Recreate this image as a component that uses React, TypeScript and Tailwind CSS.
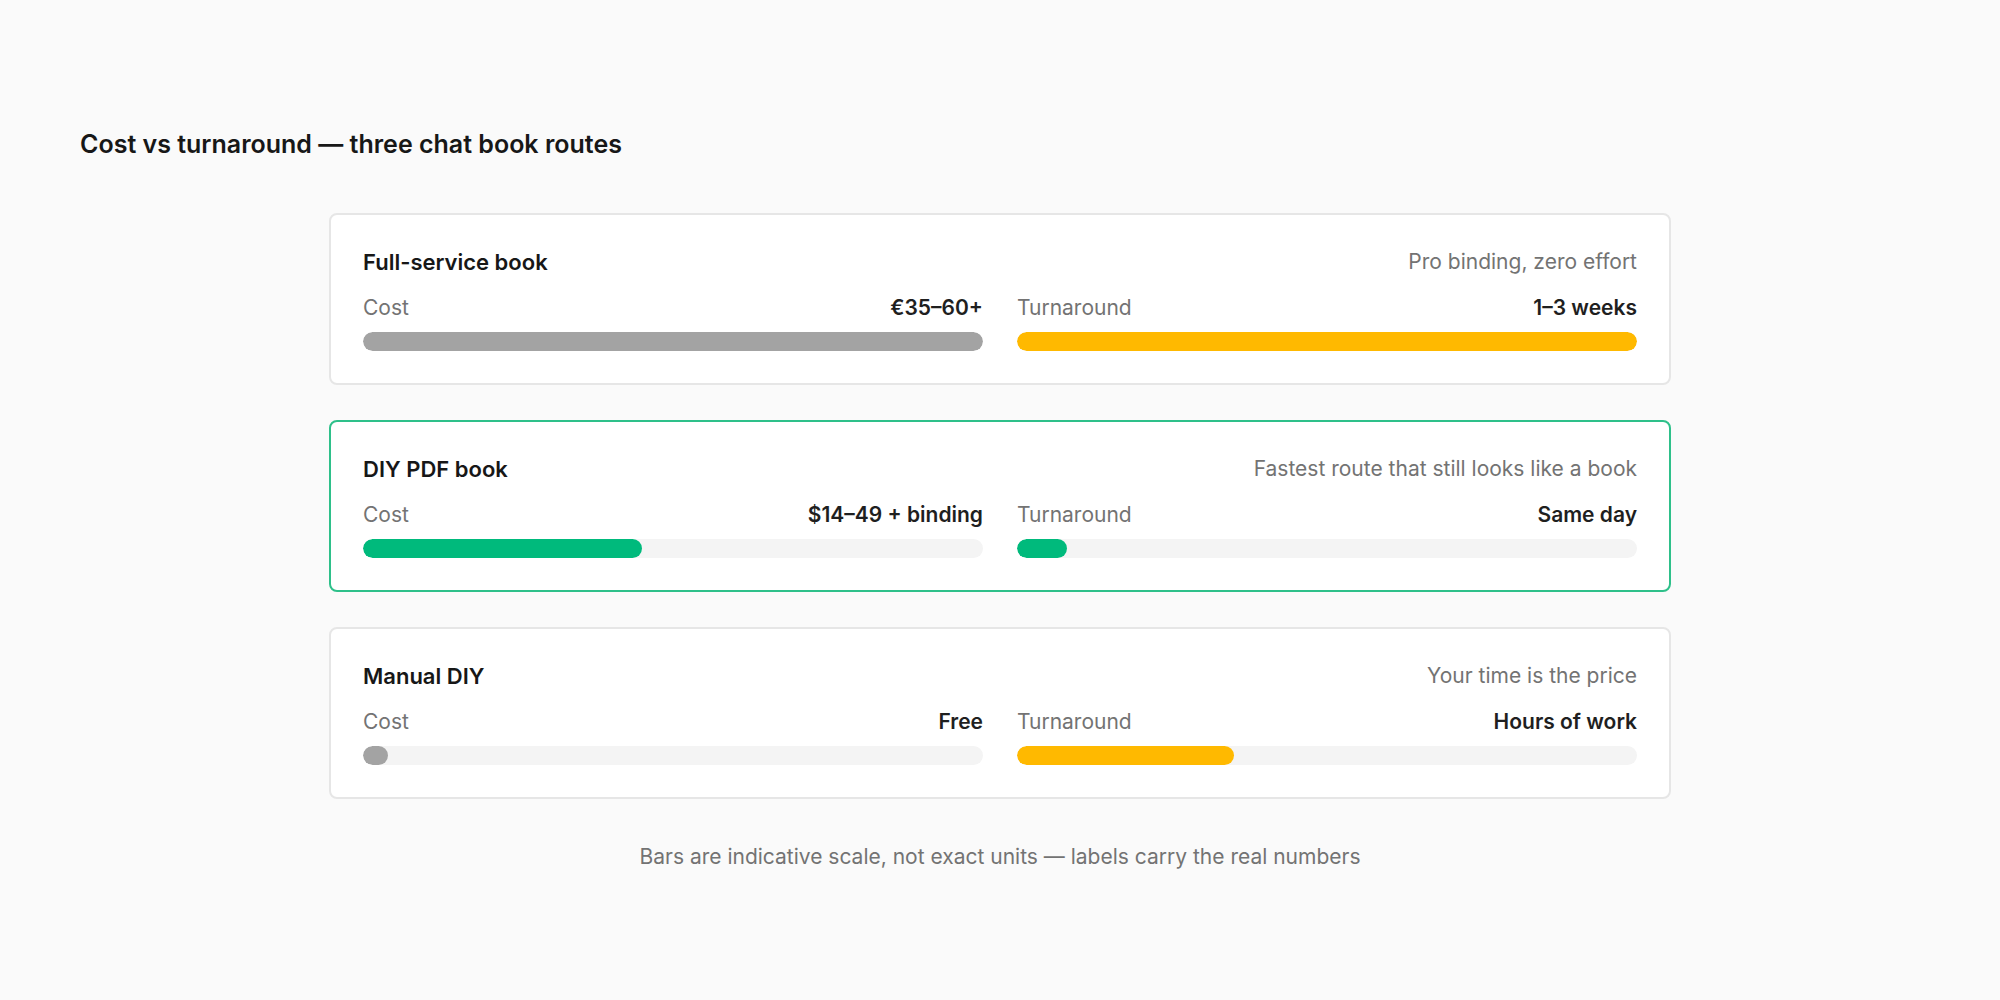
const rows = [
  { title: "Full-service book", note: "Pro binding, zero effort", cost: "€35–60+", costPct: 100, costColor: "bg-[#a3a3a3]", time: "1–3 weeks", timePct: 100, timeColor: "bg-[#ffb900]", hl: false },
  { title: "DIY PDF book", note: "Fastest route that still looks like a book", cost: "$14–49 + binding", costPct: 45, costColor: "bg-[#00ba7c]", time: "Same day", timePct: 8, timeColor: "bg-[#00ba7c]", hl: true },
  { title: "Manual DIY", note: "Your time is the price", cost: "Free", costPct: 4, costColor: "bg-[#a3a3a3]", time: "Hours of work", timePct: 35, timeColor: "bg-[#ffb900]", hl: false },
];

function Bar({ label, value, pct, color }: { label: string; value: string; pct: number; color: string }) {
  return (
    <div className="flex-1 flex flex-col">
      <div className="flex justify-between items-center h-[30px] text-[21px]">
        <span className="text-[#737373]">{label}</span>
        <span className="font-semibold text-[#1f1f1f]">{value}</span>
      </div>
      <div className="mt-[9px] h-[19px] rounded-full bg-[#f4f4f4] overflow-hidden">
        <div className={`h-full rounded-full ${color}`} style={{ width: `${pct}%` }} />
      </div>
    </div>
  );
}

export default function App() {
  return (
    <div className="min-h-[1000px] bg-[#fafafa] pt-[127px] px-[80px]" style={{ fontFamily: "Inter, 'Noto Sans', sans-serif" }}>
      <h1 className="text-[25px] leading-[34px] font-semibold text-[#171717]">Cost vs turnaround — three chat book routes</h1>
      <div className="w-[1342px] mx-auto mt-[52px] flex flex-col gap-[35px]">
        {rows.map((r) => (
          <div key={r.title} className={`bg-white rounded-[8px] border-2 ${r.hl ? "border-[#2ec08a]" : "border-[#e6e6e6]"} px-[32px] pt-[32px] pb-[32px]`}>
            <div className="flex justify-between items-center h-[30px]">
              <span className="text-[22px] font-semibold text-[#171717]">{r.title}</span>
              <span className="text-[21px] text-[#737373]">{r.note}</span>
            </div>
            <div className="flex gap-[34px] mt-[16px]">
              <Bar label="Cost" value={r.cost} pct={r.costPct} color={r.costColor} />
              <Bar label="Turnaround" value={r.time} pct={r.timePct} color={r.timeColor} />
            </div>
          </div>
        ))}
      </div>
      <p className="text-center text-[21px] text-[#737373] mt-[42px]">Bars are indicative scale, not exact units — labels carry the real numbers</p>
    </div>
  );
}
